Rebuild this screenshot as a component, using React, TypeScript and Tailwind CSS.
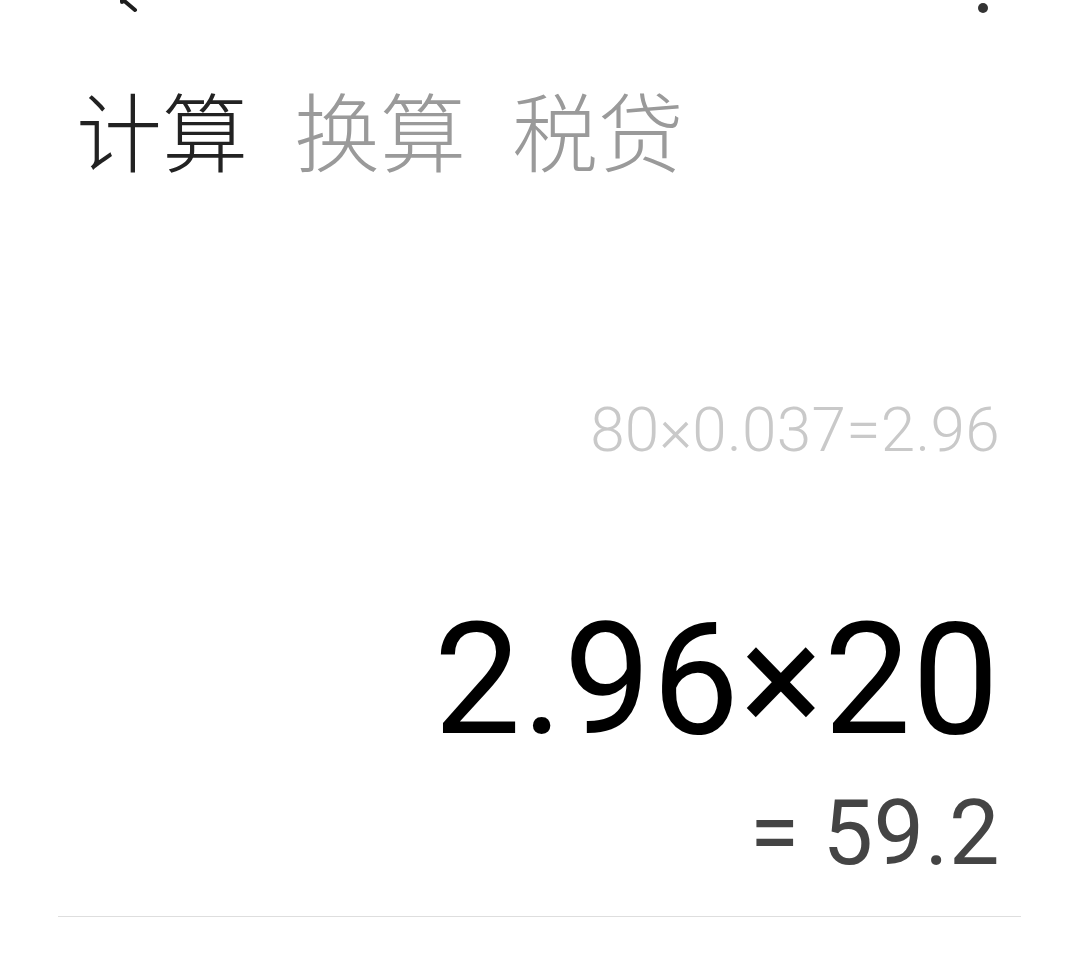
import React from "react";

const tabs = [
  { label: "计算", active: true },
  { label: "换算", active: false },
  { label: "税贷", active: false },
];

export default function App() {
  return (
    <div className="w-[1074px] h-[955px] bg-white overflow-hidden flex flex-col font-['Roboto','Noto_Sans_CJK_SC',sans-serif]">
      {/* top bar, mostly scrolled off */}
      <div className="h-[14px] flex items-end justify-between pl-[112px] pr-[86px]">
        <svg width="34" height="14" viewBox="0 0 34 14" className="text-[#1e1e1e]">
          <path d="M10 -10 L10 2 M10 -1 L23 10" fill="none" stroke="currentColor" strokeWidth="4" strokeLinecap="round" />
        </svg>
        <div className="mb-[1px] w-[10px] h-[10px] rounded-full bg-[#333]" />
      </div>

      {/* tabs */}
      <div className="mt-[66px] pl-[76px] flex gap-[46px] font-['Noto_Sans_CJK_SC',sans-serif] font-light text-[86px] leading-[98px]">
        {tabs.map((t) => (
          <span key={t.label} className={t.active ? "text-[#222]" : "text-[#9a9a9a]"}>
            {t.label}
          </span>
        ))}
      </div>

      {/* display */}
      <div className="flex-1 flex flex-col items-end pr-[74px]">
        <div className="mt-[212px] text-[62px] leading-[80px] font-light text-[#c9c9c9] tracking-[0.3px]">
          80×0.037=2.96
        </div>
        <div className="mt-[130px] text-[155px] leading-[160px] text-black tracking-[1px]">
          2.96×20
        </div>
        <div className="mt-[24px] text-[90px] leading-[100px] text-[#444] tracking-[0.5px]">
          = 59.2
        </div>
      </div>

      <div className="ml-[58px] mr-[53px] mb-[38px] h-px bg-[#dedede]" />
    </div>
  );
}
